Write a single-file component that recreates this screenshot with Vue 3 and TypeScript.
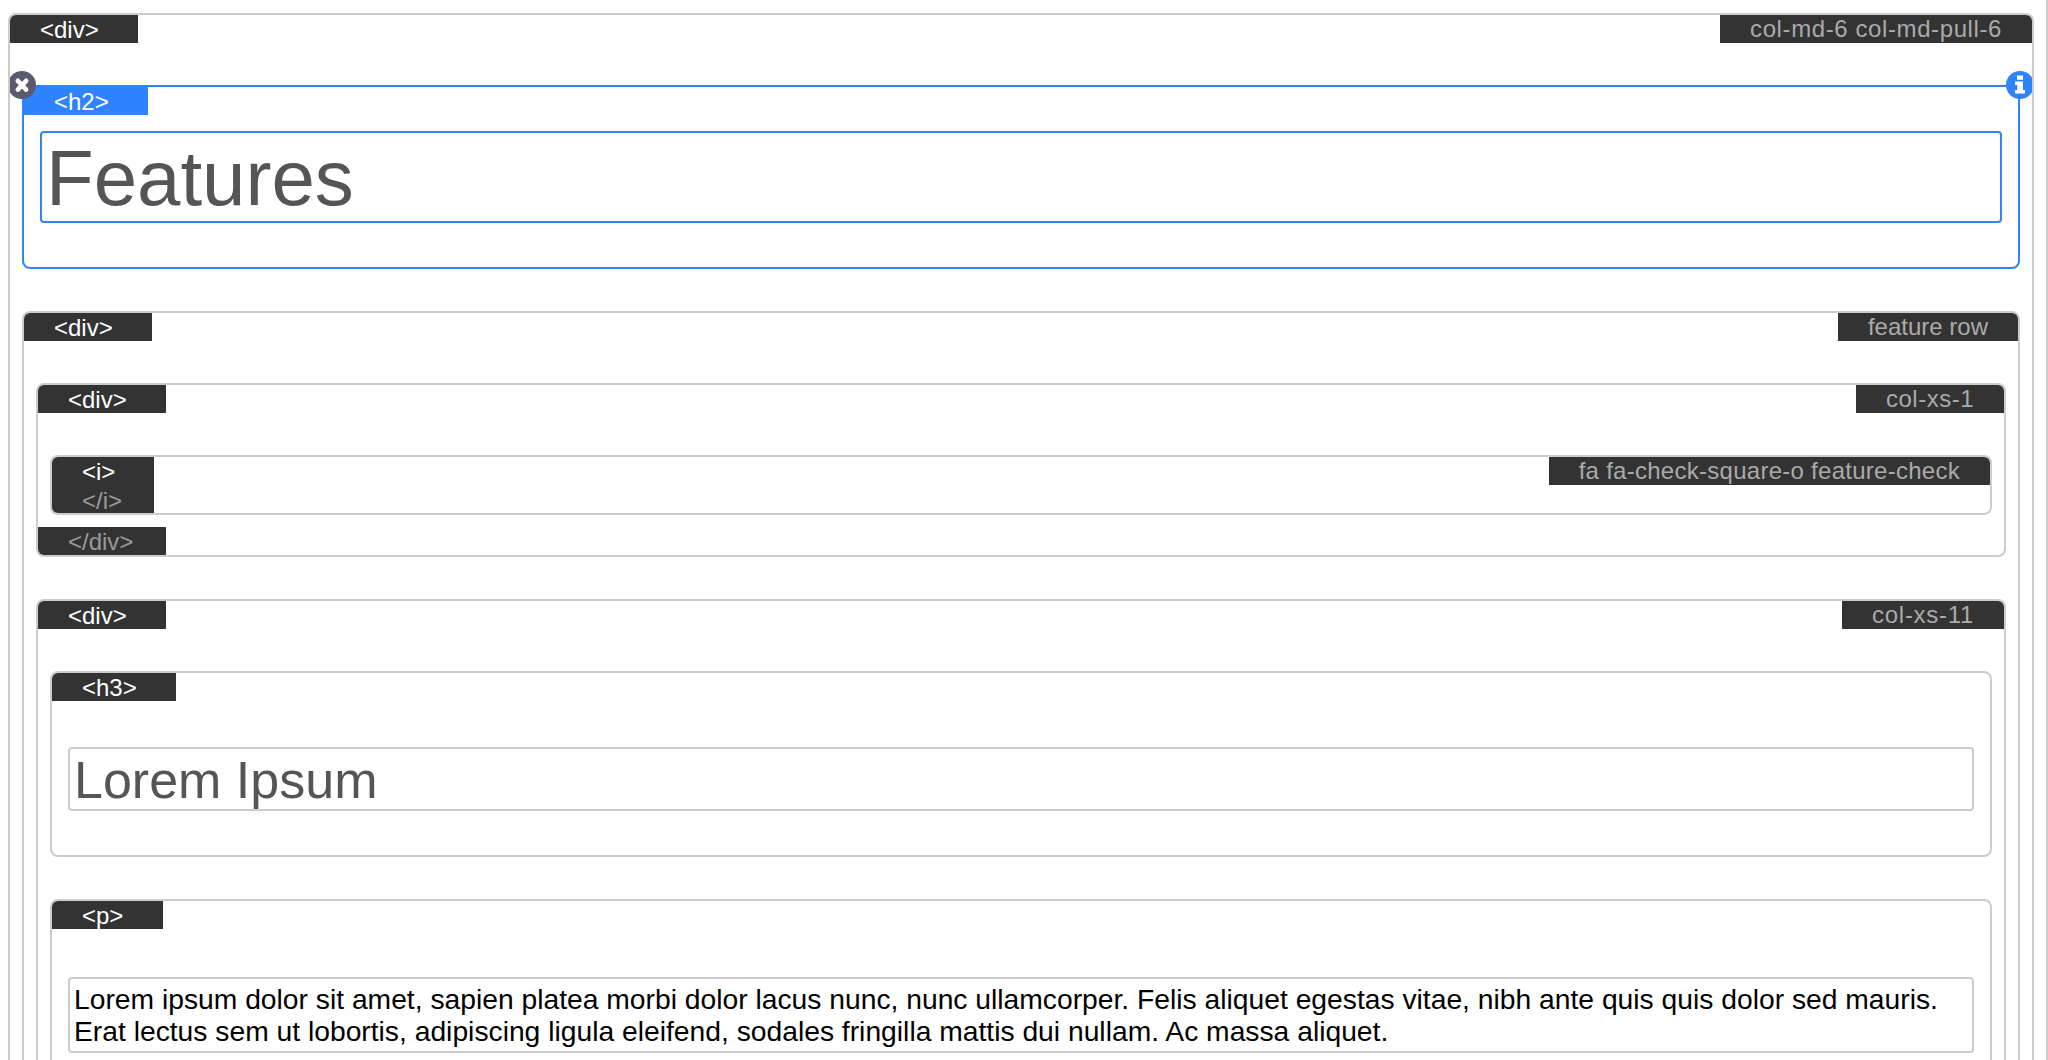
<script setup lang="ts">
const firstLine = 'Lorem ipsum dolor sit amet, sapien platea morbi dolor lacus nunc, nunc ullamcorper. Felis aliquet egestas vitae, nibh ante quis quis dolor sed mauris.'
const secondLine = 'Erat lectus sem ut lobortis, adipiscing ligula eleifend, sodales fringilla mattis dui nullam. Ac massa aliquet.'
</script>

<template>
  <div class="page">
    <div class="box outer">
      <div class="bar">
        <div class="tag w128">&lt;div&gt;</div>
        <div class="label sp-md">col-md-6 col-md-pull-6</div>
      </div>

      <div class="box selected child">
        <svg class="badge badge-left" viewBox="0 0 28 28" width="28" height="28" aria-hidden="true">
          <circle cx="14" cy="14" r="14" fill="#5a5a6e" />
          <path d="M9.800 9.800 18.200 18.600M18.200 9.800 9.800 18.600" stroke="#fff" stroke-width="4.6" stroke-linecap="round" />
        </svg>
        <svg class="badge badge-right" viewBox="0 0 28 28" width="28" height="28" aria-hidden="true">
          <circle cx="14" cy="14" r="14" fill="#3083ff" />
          <path d="M11 4.500h6v4.300h-6zM9 10.500h8V19h2v3.500H9V19h2.300v-5H9z" fill="#fff" />
        </svg>
        <div class="bar">
          <div class="tag tag-blue w124">&lt;h2&gt;</div>
        </div>
        <h2 class="text text-h2 text-selected">Features</h2>
      </div>

      <div class="box child">
        <div class="bar">
          <div class="tag w128">&lt;div&gt;</div>
          <div class="label">feature row</div>
        </div>

        <div class="box child">
          <div class="bar">
            <div class="tag w128">&lt;div&gt;</div>
            <div class="label sp-xs">col-xs-1</div>
          </div>
          <div class="box child">
            <div class="bar">
              <div class="tag tag-double w102">&lt;i&gt;<span class="closing">&lt;/i&gt;</span></div>
              <div class="label sp-fa">fa fa-check-square-o feature-check</div>
            </div>
          </div>
          <div class="tag tag-close w128">&lt;/div&gt;</div>
        </div>

        <div class="box child">
          <div class="bar">
            <div class="tag w128">&lt;div&gt;</div>
            <div class="label sp-xs-wide">col-xs-11</div>
          </div>

          <div class="box child">
            <div class="bar">
              <div class="tag w124">&lt;h3&gt;</div>
            </div>
            <h3 class="text text-h3">Lorem Ipsum</h3>
          </div>

          <div class="box child box-tail">
            <div class="bar">
              <div class="tag w111">&lt;p&gt;</div>
            </div>
            <p class="text text-p">{{ firstLine }}<br />{{ secondLine }}</p>
          </div>
        </div>
      </div>
    </div>
  </div>
</template>

<style scoped>
.page {
  box-sizing: border-box;
  height: 1060px;
  overflow: hidden;
  padding: 13px 12px 0 8px;
  border-right: 2px solid #ccc;
  background: #fff;
  font-family: "Liberation Sans", Arial, sans-serif;
}
.box {
  position: relative;
  border: 2px solid #ccc;
  border-radius: 8px;
  overflow: hidden;
  background: #fff;
}
.child {
  margin: 42px 12px 0;
}
.box-tail {
  padding-bottom: 60px;
}
.selected {
  border-color: #3083ff;
  overflow: visible;
  padding-bottom: 44px;
}
.bar {
  display: flex;
  justify-content: space-between;
  align-items: flex-start;
}
.tag,
.label {
  box-sizing: border-box;
  height: 28px;
  background: #333;
  font-size: 24px;
  line-height: 28px;
}
.tag {
  padding-left: 30px;
  color: #fff;
  line-height: 30px;
}
.tag-blue {
  background: #3083ff;
}
.tag-double {
  height: 56px;
}
.tag-close {
  margin-top: 12px;
  color: #999;
}
.closing {
  display: block;
  margin-top: -1px;
  color: #999;
}
.w128 { width: 128px; }
.w124 { width: 124px; }
.w111 { width: 111px; }
.w102 { width: 102px; }
.label {
  padding: 0 30px;
  color: #aaa;
  white-space: nowrap;
}
.sp-md { letter-spacing: 0.6px; }
.sp-xs { letter-spacing: 0.5px; }
.sp-xs-wide { letter-spacing: 0.7px; }
.sp-fa { letter-spacing: 0.27px; }
.badge {
  position: absolute;
  top: -16px;
  z-index: 2;
}
.badge-left { left: -16px; }
.badge-right { right: -16px; }
.text {
  box-sizing: border-box;
  margin: 46px 16px 44px;
  padding: 0 4px;
  border: 2px solid #ccc;
  border-radius: 4px;
  font-weight: 400;
}
.text-selected {
  border-color: #3083ff;
}
.text-h2 {
  margin: 16px 16px 0;
  height: 92px;
  color: #555;
  font-size: 78px;
  line-height: 91px;
}
.text-h3 {
  height: 64px;
  color: #555;
  font-size: 52px;
  line-height: 62px;
}
.text-p {
  margin: 48px 16px 0;
  padding: 4px;
  color: #000;
  font-size: 28.25px;
  line-height: 32px;
  white-space: nowrap;
}
</style>
